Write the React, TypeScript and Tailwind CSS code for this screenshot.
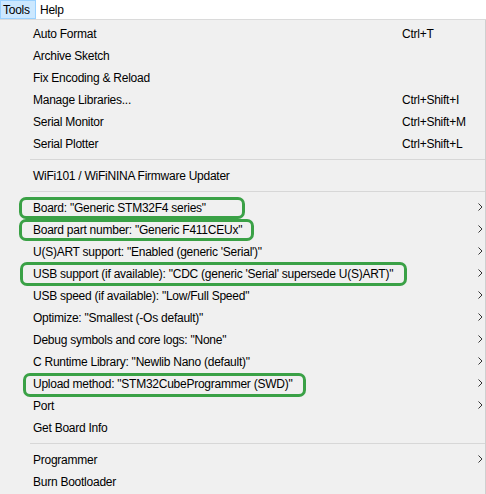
import React from "react";

type Item =
  | { sep: true }
  | { label: string; shortcut?: string; sub?: boolean; ring?: string };

const items: Item[] = [
  { label: "Auto Format", shortcut: "Ctrl+T" },
  { label: "Archive Sketch" },
  { label: "Fix Encoding & Reload" },
  { label: "Manage Libraries...", shortcut: "Ctrl+Shift+I" },
  { label: "Serial Monitor", shortcut: "Ctrl+Shift+M" },
  { label: "Serial Plotter", shortcut: "Ctrl+Shift+L" },
  { sep: true },
  { label: "WiFi101 / WiFiNINA Firmware Updater" },
  { sep: true },
  { label: 'Board: "Generic STM32F4 series"', sub: true, ring: "left-[19px] top-[1px] w-[226px] h-[22px]" },
  { label: 'Board part number: "Generic F411CEUx"', sub: true, ring: "left-[19px] top-[1px] w-[235px] h-[22px]" },
  { label: 'U(S)ART support: "Enabled (generic \'Serial\')"', sub: true },
  { label: 'USB support (if available): "CDC (generic \'Serial\' supersede U(S)ART)"', sub: true, ring: "left-[20px] top-0 w-[387px] h-[24px]" },
  { label: 'USB speed (if available): "Low/Full Speed"', sub: true },
  { label: 'Optimize: "Smallest (-Os default)"', sub: true },
  { label: 'Debug symbols and core logs: "None"', sub: true },
  { label: 'C Runtime Library: "Newlib Nano (default)"', sub: true },
  { label: 'Upload method: "STM32CubeProgrammer (SWD)"', sub: true, ring: "left-[23px] top-[1px] w-[283px] h-[24px]" },
  { label: "Port", sub: true },
  { label: "Get Board Info" },
  { sep: true },
  { label: "Programmer", sub: true },
  { label: "Burn Bootloader" },
];

function Chevron() {
  return (
    <svg width="5" height="8" viewBox="0 0 5 8" className="absolute left-[478px] top-[7px]">
      <path d="M0.5 0.5 L4 4 L0.5 7.5" fill="none" stroke="#333" strokeWidth="1" />
    </svg>
  );
}

export default function App() {
  return (
    <div
      className="w-[486px] h-[494px] overflow-hidden bg-[#f0f0f0] text-[12px] text-black tracking-[-0.25px]"
      style={{ fontFamily: '"Segoe UI", "Liberation Sans", Arial, sans-serif' }}
    >
      <div className="h-[20px] bg-white border-b border-[#dadada] flex items-stretch">
        <div className="w-[36px] h-[19px] bg-[#cce8ff] border border-[#99d1ff] flex items-center pl-[2px]">Tools</div>
        <div className="flex items-center pl-[4px]">Help</div>
      </div>
      <div className="pt-[2px] relative border-r border-[#cfcfcf] h-[474px]">
        {items.map((it, i) =>
          "sep" in it ? (
            <div key={i} className="h-[10px] flex items-center pl-[30px]">
              <div className="h-px w-full bg-[#d7d7d7]" />
            </div>
          ) : (
            <div key={i} className="h-[22px] relative flex items-center pl-[33px] pt-[2px]">
              <span className="whitespace-pre">{it.label}</span>
              {it.shortcut && <span className="absolute left-[402px]">{it.shortcut}</span>}
              {it.sub && <Chevron />}
              {it.ring && (
                <div className={`absolute ${it.ring} border-[3px] border-[#3aa146] rounded-[7px]`} />
              )}
            </div>
          )
        )}
      </div>
    </div>
  );
}
